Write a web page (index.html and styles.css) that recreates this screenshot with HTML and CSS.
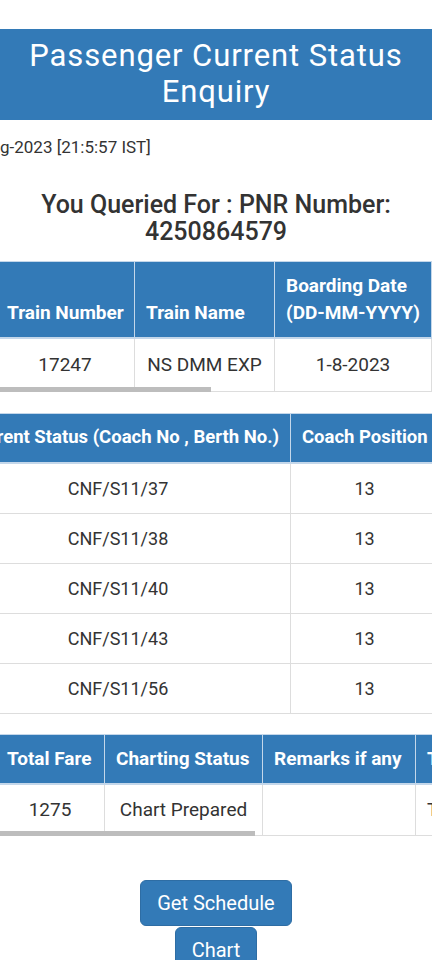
FILE: index.html
```html
<!DOCTYPE html>
<html lang="en">
<head>
<meta charset="utf-8">
<meta name="viewport" content="width=device-width, initial-scale=1">
<title>Passenger Current Status Enquiry</title>
<link rel="stylesheet" href="styles.css">
</head>
<body>
<header class="banner">Passenger Current Status<br>Enquiry</header>

<div class="timestamp">g-2023 [21:5:57 IST]</div>

<h3 class="query">You Queried For : PNR Number:<br>4250864579</h3>

<div class="scroller">
  <table class="grid grid-journey">
    <colgroup><col class="c139"><col class="c140"><col class="c157"></colgroup>
    <thead>
      <tr><th>Train Number</th><th>Train Name</th><th>Boarding Date<br>(DD-MM-YYYY)</th></tr>
    </thead>
    <tbody>
      <tr><td>17247</td><td>NS DMM EXP</td><td>1-8-2023</td></tr>
    </tbody>
  </table>
  <div class="thumb thumb-journey"></div>
</div>

<div class="scroller scroller-status">
  <table class="grid grid-status">
    <colgroup><col class="c345"><col class="c148"></colgroup>
    <thead>
      <tr><th class="th-end">Current Status (Coach No , Berth No.)</th><th>Coach Position</th></tr>
    </thead>
    <tbody>
      <tr><td>CNF/S11/37</td><td>13</td></tr>
      <tr><td>CNF/S11/38</td><td>13</td></tr>
      <tr><td>CNF/S11/40</td><td>13</td></tr>
      <tr><td>CNF/S11/43</td><td>13</td></tr>
      <tr><td>CNF/S11/56</td><td>13</td></tr>
    </tbody>
  </table>
</div>

<div class="scroller">
  <table class="grid grid-fare">
    <colgroup><col class="c109"><col class="c158"><col class="c153"><col class="c100"></colgroup>
    <thead>
      <tr><th>Total Fare</th><th>Charting Status</th><th>Remarks if any</th><th>T</th></tr>
    </thead>
    <tbody>
      <tr><td>1275</td><td>Chart Prepared</td><td></td><td class="td-left">T</td></tr>
    </tbody>
  </table>
  <div class="thumb thumb-fare"></div>
</div>

<div class="actions">
  <button class="btn btn-schedule" type="button">Get Schedule</button>
  <button class="btn btn-chart" type="button">Chart</button>
</div>
</body>
</html>
```

FILE: styles.css
```css
* { box-sizing: border-box; }

html, body {
  margin: 0;
  padding: 0;
  background: #ffffff;
}

body {
  padding-top: 29px;
  font-family: Roboto, "Noto Sans", "Liberation Sans", sans-serif;
  color: #333333;
  overflow: hidden;
}

.banner {
  background: #337ab7;
  color: #ffffff;
  text-align: center;
  font-size: 31px;
  letter-spacing: 0.9px;
  line-height: 36px;
  font-weight: 400;
  padding: 9px 0 10px;
  white-space: nowrap;
}

.timestamp {
  margin-top: 17px;
  font-size: 17px;
  line-height: 20px;
  color: #333333;
  white-space: nowrap;
}

.query {
  margin: 35px 0 16px;
  text-align: center;
  font-size: 25px;
  line-height: 26.7px;
  font-weight: 500;
  color: #333333;
}

.scroller {
  position: relative;
  width: 100%;
  overflow: hidden;
  margin-bottom: 21px;
}

.scroller-status { margin-bottom: 20px; }

.grid {
  border-collapse: collapse;
  table-layout: fixed;
  font-size: 19px;
}

.grid-journey { width: 436px; margin-left: -5px; }
.grid-status  { width: 493px; margin-left: -55px; }
.grid-fare    { width: 520px; margin-left: -5px; }

.c139 { width: 139px; }
.c140 { width: 140px; }
.c157 { width: 157px; }
.c345 { width: 345px; }
.c148 { width: 148px; }
.c109 { width: 109px; }
.c158 { width: 158px; }
.c153 { width: 153px; }
.c100 { width: 100px; }

.grid th {
  background: #337ab7;
  color: #ffffff;
  font-weight: 700;
  text-align: left;
  vertical-align: bottom;
  white-space: nowrap;
  overflow: hidden;
  padding: 10px 11px 11px;
  line-height: 27px;
  border: 1px solid #c4d7ea;
  border-bottom: 2px solid #c4d7ea;
}

.grid-status th { font-size: 18.5px; }

.grid .th-end {
  text-align: right;
}

.grid td {
  text-align: center;
  vertical-align: middle;
  white-space: nowrap;
  overflow: hidden;
  padding: 12px 11px 11px;
  line-height: 26px;
  border: 1px solid #dddddd;
  color: #333333;
}

.grid-status td { font-size: 18px; }
.grid-journey td { padding: 13px 11px 13px; }
.grid-fare td { padding: 12px 11px 12px; }

.grid .td-left { text-align: left; }

.thumb {
  position: absolute;
  left: 0;
  bottom: 0;
  height: 5px;
  background: #bdbdbd;
}

.thumb-journey { width: 211px; }
.thumb-fare { width: 255px; }

.actions {
  display: flex;
  flex-direction: column;
  align-items: center;
  gap: 1px;
  margin-top: 44px;
}

.btn {
  font-family: Roboto, "Noto Sans", "Liberation Sans", sans-serif;
  font-size: 20px;
  line-height: 24px;
  padding: 10px 16px;
  color: #ffffff;
  background: #337ab7;
  border: 1px solid #2e6da4;
  border-radius: 6px;
}
```
